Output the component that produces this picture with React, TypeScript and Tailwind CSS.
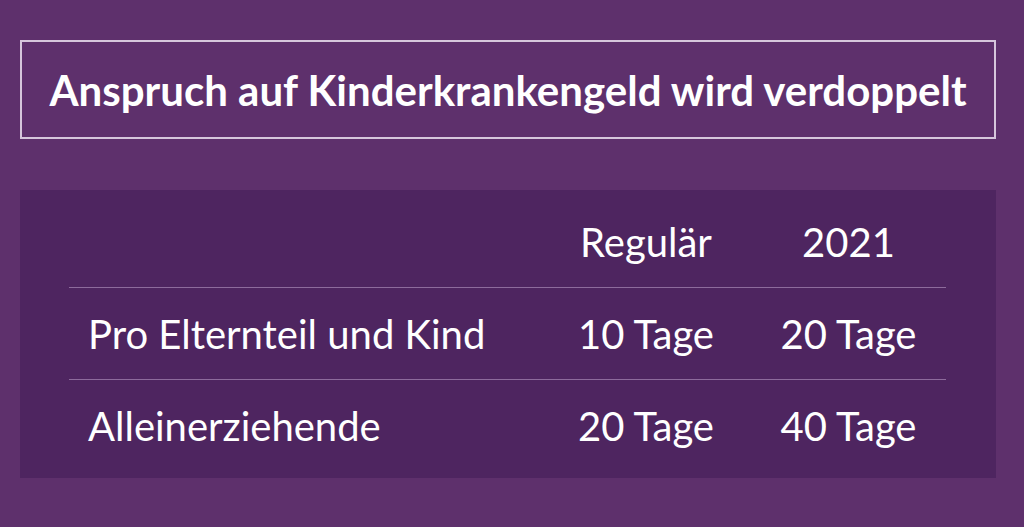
import React from "react";

const rows = [
  { label: "Pro Elternteil und Kind", regular: "10 Tage", y2021: "20 Tage" },
  { label: "Alleinerziehende", regular: "20 Tage", y2021: "40 Tage" },
];

const App = () => {
  return (
    <div className="w-[1024px] h-[527px] bg-[#5e306c] pl-5 pr-[28px] pt-10 font-['Lato',sans-serif] text-white overflow-hidden">
      <div className="h-[99px] border-2 border-[#d6c6dc] flex items-center justify-center">
        <h1 className="text-[42px] font-bold leading-none">
          Anspruch auf Kinderkrankengeld wird verdoppelt
        </h1>
      </div>

      <div className="mt-[51px] bg-[#4e2560] pt-[7px] pb-[6px] pl-[49px] pr-[50px]">
        <div className="grid grid-cols-[472px_210px_1fr] h-[91px] items-center border-b border-[#8d6b9c] text-[40px] leading-none">
          <div></div>
          <div className="text-center">Regulär</div>
          <div className="text-center">2021</div>
        </div>
        {rows.map((row, i) => (
          <div
            key={row.label}
            className={`grid grid-cols-[472px_210px_1fr] h-[92px] items-center text-[40px] leading-none ${
              i === 0 ? "border-b border-[#8d6b9c]" : ""
            }`}
          >
            <div className="pl-[19px]">{row.label}</div>
            <div className="text-center">{row.regular}</div>
            <div className="text-center">{row.y2021}</div>
          </div>
        ))}
      </div>
    </div>
  );
};

export default App;
